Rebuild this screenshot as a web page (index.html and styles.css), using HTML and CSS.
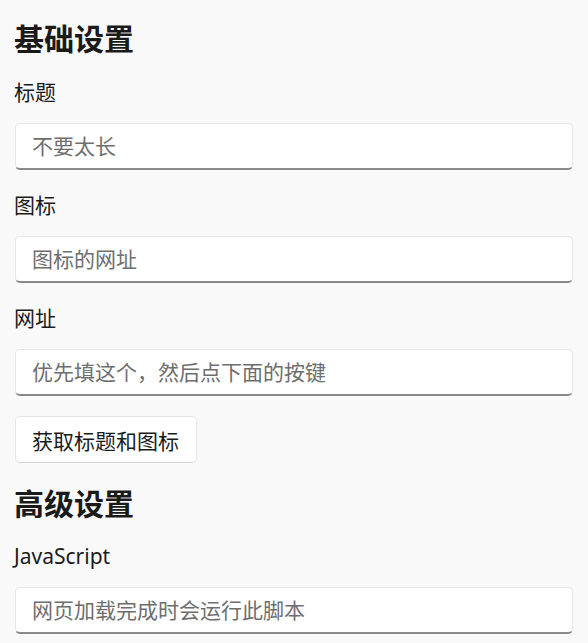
FILE: index.html
```html
<!DOCTYPE html>
<html lang="zh-CN">
<head>
<meta charset="utf-8">
<title>设置</title>
<link rel="stylesheet" href="styles.css">
</head>
<body>
<main class="page">
  <section class="group">
    <h2 class="group-title">基础设置</h2>
    <label class="field">
      <span class="field-label">标题</span>
      <input class="text-box" type="text" placeholder="不要太长">
    </label>
    <label class="field">
      <span class="field-label">图标</span>
      <input class="text-box" type="text" placeholder="图标的网址">
    </label>
    <label class="field">
      <span class="field-label">网址</span>
      <input class="text-box" type="text" placeholder="优先填这个，然后点下面的按键">
    </label>
    <div class="actions">
      <button class="btn" type="button">获取标题和图标</button>
    </div>
  </section>
  <section class="group">
    <h2 class="group-title">高级设置</h2>
    <label class="field">
      <span class="field-label">JavaScript</span>
      <input class="text-box" type="text" placeholder="网页加载完成时会运行此脚本">
    </label>
  </section>
</main>
</body>
</html>
```
FILE: styles.css
```css
* { box-sizing: border-box; }
html, body {
  margin: 0;
  background: #f9f9f9;
}
body {
  font-family: "Noto Sans", "Noto Sans CJK SC", sans-serif;
  color: #1b1b1b;
}
.page {
  padding: 19px 15px 0 14px;
  display: flex;
  flex-direction: column;
}
.group {
  display: flex;
  flex-direction: column;
}
.group-title {
  margin: 0;
  font-size: 30px;
  line-height: 40px;
  font-weight: 700;
  color: #1a1a1a;
}
.field {
  display: flex;
  flex-direction: column;
  margin-top: 19px;
}
.field + .field { margin-top: 21px; }
.field-label {
  font-size: 21px;
  line-height: 28px;
  color: #1b1b1b;
}
.text-box {
  margin: 17px 0 0 1px;
  height: 47px;
  width: calc(100% - 1px);
  padding: 0 16px;
  font-family: inherit;
  font-size: 21px;
  color: #1b1b1b;
  background: #ffffff;
  border: 1px solid #e6e6e6;
  border-bottom: 2px solid #888888;
  border-radius: 5px;
  outline: none;
}
.text-box::placeholder { color: #6e6e6e; }
.actions {
  display: flex;
  margin-top: 20px;
  padding-left: 1px;
}
.btn {
  height: 47px;
  padding: 0 17px 0 16px;
  font-family: inherit;
  font-size: 21px;
  color: #1b1b1b;
  background: #ffffff;
  border: 1px solid #e6e6e6;
  border-bottom-color: #d2d2d2;
  border-radius: 5px;
}
.group + .group .group-title { margin-top: 21px; }
.group + .group .field { margin-top: 18px; }
```
